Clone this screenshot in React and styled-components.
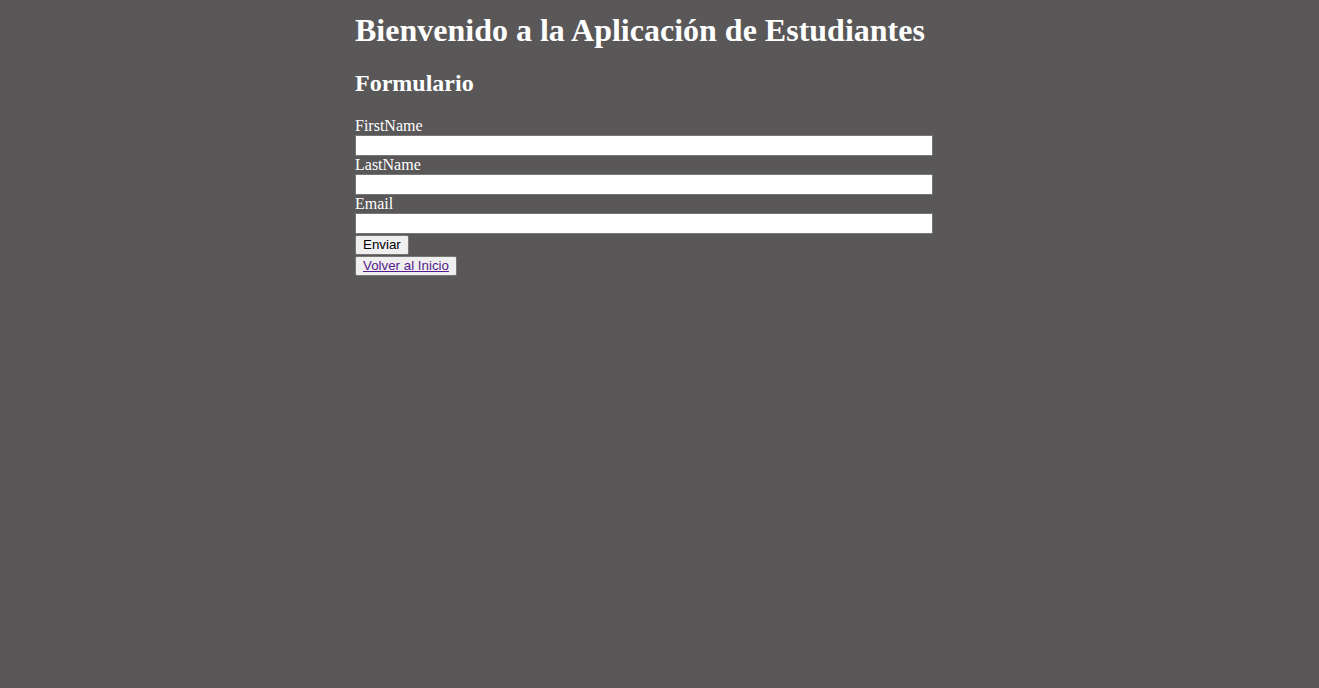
import React from "react";
import styled, { createGlobalStyle } from "styled-components";

const Global = createGlobalStyle`
  html, body { margin: 0; padding: 0; background: #595758; }
  body { font-family: "Liberation Serif", "Times New Roman", serif; color: #ffffff; font-size: 16px; }
`;

const Container = styled.div`
  margin-left: 355px;
  width: 578px;
  padding-top: 13px;
  display: flex;
  flex-direction: column;
  align-items: flex-start;
`;

const Title = styled.h1`
  font-size: 32px;
  font-weight: bold;
  margin: 0 0 22px 0;
  line-height: 35px;
  white-space: nowrap;
`;

const Subtitle = styled.h2`
  font-size: 24px;
  font-weight: bold;
  margin: 0 0 20px 0;
  line-height: 27px;
`;

const Form = styled.form`
  display: flex;
  flex-direction: column;
  align-items: flex-start;
  width: 100%;
`;

const Label = styled.label`
  display: block;
  font-size: 16px;
  line-height: 18px;
  height: 18px;
  color: #ffffff;
`;

const Input = styled.input`
  display: block;
  box-sizing: border-box;
  width: 578px;
  height: 21px;
  margin: 0;
  padding: 1px 2px;
  border: 1px solid #767676;
  background: #ffffff;
  font-family: "Liberation Sans", Arial, sans-serif;
  font-size: 13.33px;
`;

const Button = styled.button`
  box-sizing: border-box;
  height: 20px;
  margin: ${(p) => (p.$gapTop ? "1px 0 0 0" : "1px 0 0 0")};
  padding: 1px 7px;
  border: 1px solid #767676;
  border-radius: 2px;
  background: #efefef;
  color: #000000;
  font-family: "Liberation Sans", Arial, sans-serif;
  font-size: 13.33px;
  line-height: 16px;
  cursor: pointer;
`;

const Link = styled.a`
  color: #551a8b;
  text-decoration: underline;
`;

export default function App() {
  return (
    <>
      <Global />
      <Container>
        <Title>Bienvenido a la Aplicación de Estudiantes</Title>
        <Subtitle>Formulario</Subtitle>
        <Form onSubmit={(e) => e.preventDefault()}>
          <Label htmlFor="fn">FirstName</Label>
          <Input id="fn" type="text" />
          <Label htmlFor="ln">LastName</Label>
          <Input id="ln" type="text" />
          <Label htmlFor="em">Email</Label>
          <Input id="em" type="email" />
          <Button type="submit">Enviar</Button>
        </Form>
        <Button $gapTop type="button">
          <Link href="#">Volver al Inicio</Link>
        </Button>
      </Container>
    </>
  );
}
